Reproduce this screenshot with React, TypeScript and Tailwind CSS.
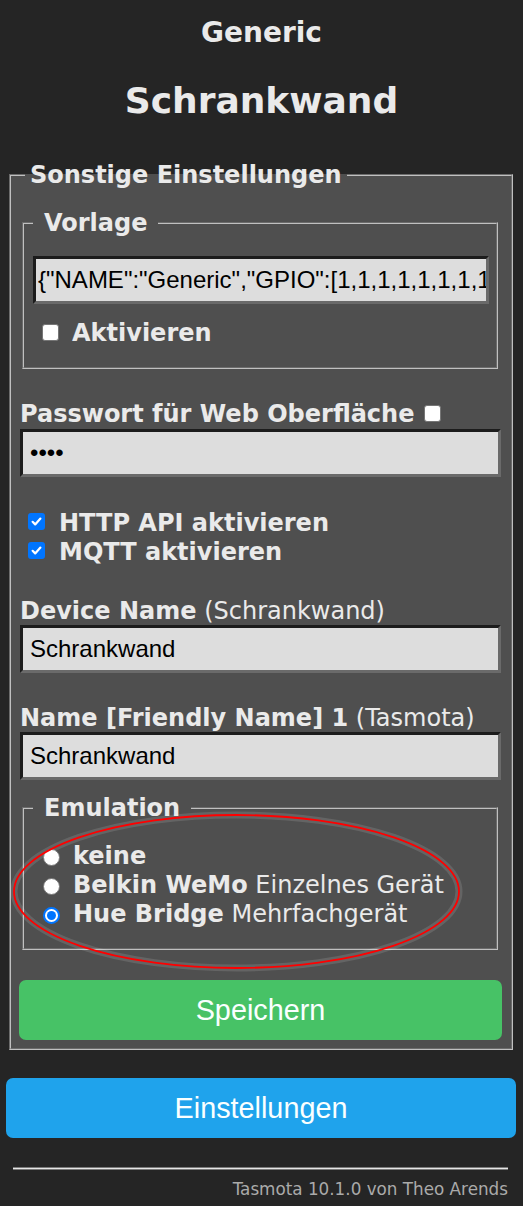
import React from 'react';

const inputCls =
  "block w-full h-[48px] bg-[#dddddd] text-black text-[24px] font-['Liberation_Sans',Arial,sans-serif] border-[3px] border-t-[#1c1c1c] border-l-[#1c1c1c] border-r-[#6a6a6a] border-b-[#6a6a6a] outline-none";

const groove = 'border-2 border-[#c0c0c0] [--tw-border-style:groove] bg-[#4f4f4f]';

function Check({ checked, className }: { checked?: boolean; className?: string }) {
  if (checked) {
    return (
      <span className={`flex h-[17px] w-[17px] shrink-0 items-center justify-center rounded-[3px] bg-[#0075ff] ${className ?? ''}`}>
        <svg width="13" height="13" viewBox="0 0 13 13">
          <path d="M2.6 6.8 L5.2 9.4 L10.4 3.6" fill="none" stroke="#ffffff" strokeWidth="2.2" strokeLinecap="round" strokeLinejoin="round" />
        </svg>
      </span>
    );
  }
  return (
    <span
      className={`block h-[17px] w-[17px] shrink-0 rounded-[3px] border-[1.5px] border-[#767676] bg-white ${className ?? ''}`}
    />
  );
}

function Radio({ checked }: { checked?: boolean }) {
  if (checked) {
    return (
      <span className="mt-[7px] ml-[10px] mr-[13px] flex h-[17px] w-[17px] shrink-0 items-center justify-center rounded-full border-2 border-[#0075ff] bg-white">
        <span className="block h-[9px] w-[9px] rounded-full bg-[#0075ff]" />
      </span>
    );
  }
  return (
    <span className="mt-[7px] ml-[10px] mr-[13px] block h-[17px] w-[17px] shrink-0 rounded-full border-[1.5px] border-[#767676] bg-white" />
  );
}

export default function App() {
  return (
    <div className="relative min-h-[1206px] w-full overflow-hidden bg-[#252525] font-['DejaVu_Sans',Verdana,sans-serif] text-[24px] text-[#eaeaea]">
      <div className="pt-[16px] text-center">
        <h3 className="text-[28px] font-bold leading-[33px]">Generic</h3>
        <h2 className="mt-[31px] text-[36px] font-bold leading-[42px]">Schrankwand</h2>
      </div>

      <fieldset className={`mt-[39px] ml-[9px] mr-[10px] pl-[9px] pr-[10px] pt-[20px] pb-[8px] ${groove}`}>
        <legend className="ml-[5px] px-[5px] font-bold leading-[28px]">Sonstige Einstellungen</legend>

        <fieldset className={`ml-[2px] mr-[3px] pl-[9px] pr-[7px] pt-[19px] pb-[20px] ${groove}`}>
          <legend className="px-[11px] font-bold leading-[28px]">Vorlage</legend>
          <input
            className={`${inputCls} pl-[2px] pr-0`}
            defaultValue={'{"NAME":"Generic","GPIO":[1,1,1,1,1,1,1,1,1,1,1,1,1,1],"FLAG":0,"BASE":18}'}
          />
          <label className="mt-[15px] flex items-start leading-[28px]">
            <Check className="mt-[5px] ml-[9px] mr-[13px]" />
            <b>Aktivieren</b>
          </label>
        </fieldset>

        <label className="mt-[32px] flex items-start leading-[27px]">
          <b>Passwort für Web Oberfläche</b>
          <Check className="mt-[4px] ml-[10px]" />
        </label>
        <input type="password" className={`${inputCls} mt-[1px] px-[7px]`} defaultValue="****" />

        <div className="mt-[32px] flex flex-col leading-[29px]">
          <label className="flex items-start">
            <Check checked className="mt-[4px] ml-[8px] mr-[14px]" />
            <b>HTTP API aktivieren</b>
          </label>
          <label className="flex items-start">
            <Check checked className="mt-[4px] ml-[8px] mr-[14px]" />
            <b>MQTT aktivieren</b>
          </label>
        </div>

        <label className="mt-[31px] block leading-[27px]">
          <b>Device Name</b> (Schrankwand)
        </label>
        <input className={`${inputCls} px-[7px]`} defaultValue="Schrankwand" />

        <label className="mt-[32px] block leading-[27px]">
          <b>Name [Friendly Name] 1</b> (Tasmota)
        </label>
        <input className={`${inputCls} px-[7px]`} defaultValue="Schrankwand" />

        <fieldset className={`mt-[14px] ml-[2px] mr-[3px] pl-[9px] pr-[7px] pt-[20px] pb-[19px] ${groove}`}>
          <legend className="px-[11px] font-bold leading-[28px]">Emulation</legend>
          <div className="flex flex-col leading-[29px]">
            <label className="flex items-start">
              <Radio />
              <b>keine</b>
            </label>
            <label className="flex items-start">
              <Radio />
              <span>
                <b>Belkin WeMo</b> Einzelnes Gerät
              </span>
            </label>
            <label className="flex items-start">
              <Radio checked />
              <span>
                <b>Hue Bridge</b> Mehrfachgerät
              </span>
            </label>
          </div>
        </fieldset>

        <button className="mt-[30px] -mx-px block h-[60px] w-[calc(100%+2px)] rounded-[7px] bg-[#47c266] font-['Liberation_Sans',Arial,sans-serif] text-[28.8px] leading-[60px] text-[#faffff]">
          Speichern
        </button>
      </fieldset>

      <div className="mt-[28px] ml-[6px] mr-[7px]">
        <button className="block h-[60px] w-full rounded-[7px] bg-[#1fa3ec] font-['Liberation_Sans',Arial,sans-serif] text-[28.8px] leading-[60px] text-[#faffff]">
          Einstellungen
        </button>
      </div>

      <div className="mt-[29px] ml-[13px] mr-[15px]">
        <div className="h-[3px] border-y border-[#7a7a7a] bg-[#e6e6e6]" />
        <div className="mt-[10px] text-right text-[16.8px] leading-[19px] text-[#aaaaaa]">
          Tasmota 10.1.0 von Theo Arends
        </div>
      </div>

      {/* red annotation ring round the emulation options */}
      <svg
        className="pointer-events-none absolute left-[10px] top-[810px]"
        width="454"
        height="163"
        viewBox="0 0 454 163"
      >
        <ellipse cx="226.5" cy="81.5" rx="222.5" ry="76.5" fill="none" stroke="rgba(255,255,255,0.12)" strokeWidth="7" />
        <ellipse cx="226.5" cy="81.5" rx="222.5" ry="76.5" fill="none" stroke="#ff0000" strokeWidth="1.8" />
      </svg>
    </div>
  );
}
